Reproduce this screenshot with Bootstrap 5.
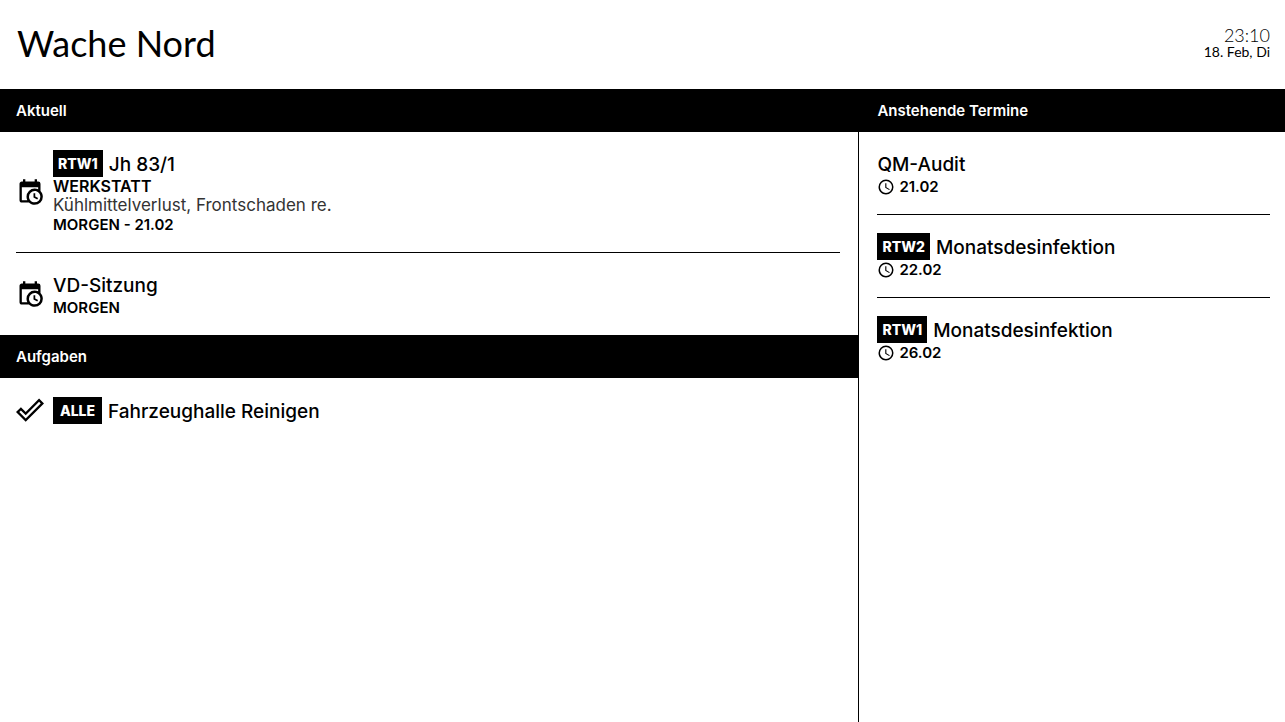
<!DOCTYPE html>
<html lang="de">
<head>
<meta charset="utf-8">
<meta name="viewport" content="width=device-width, initial-scale=1">
<title>Wache Nord</title>
<link href="https://cdn.jsdelivr.net/npm/bootstrap@5.3.0/dist/css/bootstrap.min.css" rel="stylesheet">
<style>
  body { font-family: Inter, "Open Sans", sans-serif; color: #000; background: #fff; }
  .station-head { padding: 21px 15px 24px 17px; }
  .station-head h1 { font: 400 36px/44px Lato, sans-serif; }
  .clock-time { font: 300 18px/18px Lato, sans-serif; }
  .clock-date { font: 400 14px/16px Lato, sans-serif; }
  .section-bar { background: #000; color: #fff; font-size: 15px; font-weight: 600; line-height: 43px; padding: 0 16px; }
  .upcoming { flex: 0 0 33.2%; border-left: 1px solid #000; }
  .upcoming .section-bar, .upcoming .entries { padding-left: 18px; }
  .entries { padding: 0 15px 0 16px; }
  .current .entries { padding-right: 18px; }
  .entry { padding: 18px 0; gap: 9px; }
  .entry + .entry { border-top: 1px solid #000; }
  .entry-title { font-size: 19px; font-weight: 500; line-height: 29px; height: 27px; gap: 6px; }
  .unit-tag { background: #000; color: #fff; font-size: 14px; font-weight: 800; line-height: 27px; min-width: 49px; padding: 0 5px; text-align: center; }
  .entry-kind { font-size: 16px; font-weight: 600; line-height: 19px; }
  .entry-note { font-size: 17px; line-height: 19px; color: #333; }
  .entry-date { font-size: 15px; font-weight: 600; line-height: 19px; gap: 4px; }
  svg { fill: #000; flex: none; }
</style>
</head>
<body class="min-vh-100 d-flex flex-column">
<svg class="d-none" aria-hidden="true">
  <symbol id="calendar-clock" viewBox="0 0 24 24"><path d="M15,13H16.5V15.82L18.94,17.23L18.19,18.53L15,16.69V13M19,8H5V19H9.67C9.24,18.09 9,17.07 9,16A7,7 0 0,1 16,9C17.07,9 18.09,9.24 19,9.67V8M5,21C3.89,21 3,20.1 3,19V5C3,3.89 3.89,3 5,3H6V1H8V3H16V1H18V3H19A2,2 0 0,1 21,5V11.1C22.24,12.36 23,14.09 23,16A7,7 0 0,1 16,23C14.09,23 12.36,22.24 11.1,21H5M16,11.15A4.85,4.85 0 0,0 11.15,16C11.15,18.68 13.32,20.85 16,20.85A4.85,4.85 0 0,0 20.85,16C20.85,13.32 18.68,11.15 16,11.15Z"/></symbol>
  <symbol id="check-outline" viewBox="0 0 24 24"><path d="M19.78,2.2L24,6.44L8.33,22.11L0,13.78L4.22,9.55L8.33,13.67L19.78,2.2M19.78,5L8.33,16.5L4.22,12.38L2.83,13.78L8.33,19.28L21.17,6.44L19.78,5Z"/></symbol>
  <symbol id="clock-outline" viewBox="0 0 24 24"><path d="M12,20A8,8 0 0,0 20,12A8,8 0 0,0 12,4A8,8 0 0,0 4,12A8,8 0 0,0 12,20M12,2A10,10 0 0,1 22,12A10,10 0 0,1 12,22C6.47,22 2,17.5 2,12A10,10 0 0,1 12,2M12.5,7V12.25L17,14.92L16.25,16.15L11,13V7H12.5Z"/></symbol>
</svg>

<header class="station-head d-flex justify-content-between align-items-center">
  <h1 class="m-0">Wache Nord</h1>
  <div class="text-end">
    <div class="clock-time">23:10</div>
    <div class="clock-date">18. Feb, Di</div>
  </div>
</header>

<main class="d-flex flex-grow-1">
  <div class="current flex-fill">
    <section>
      <h2 class="section-bar m-0">Aktuell</h2>
      <div class="entries">
        <article class="entry d-flex align-items-center">
          <svg width="28" height="28"><use href="#calendar-clock"/></svg>
          <div>
            <h3 class="entry-title d-flex m-0"><span class="unit-tag">RTW1</span>Jh 83/1</h3>
            <div class="entry-kind">WERKSTATT</div>
            <div class="entry-note">Kühlmittelverlust, Frontschaden re.</div>
            <div class="entry-date">MORGEN - 21.02</div>
          </div>
        </article>
        <article class="entry d-flex align-items-center">
          <svg width="28" height="28"><use href="#calendar-clock"/></svg>
          <div>
            <h3 class="entry-title d-flex m-0">VD-Sitzung</h3>
            <div class="entry-date">MORGEN</div>
          </div>
        </article>
      </div>
    </section>
    <section>
      <h2 class="section-bar m-0">Aufgaben</h2>
      <div class="entries">
        <article class="entry d-flex align-items-center">
          <svg width="28" height="28"><use href="#check-outline"/></svg>
          <h3 class="entry-title d-flex m-0"><span class="unit-tag">ALLE</span>Fahrzeughalle Reinigen</h3>
        </article>
      </div>
    </section>
  </div>

  <section class="upcoming">
    <h2 class="section-bar m-0">Anstehende Termine</h2>
    <div class="entries">
      <article class="entry">
        <h3 class="entry-title d-flex m-0">QM-Audit</h3>
        <div class="entry-date d-flex align-items-center"><svg width="18" height="18"><use href="#clock-outline"/></svg>21.02</div>
      </article>
      <article class="entry">
        <h3 class="entry-title d-flex m-0"><span class="unit-tag">RTW2</span>Monatsdesinfektion</h3>
        <div class="entry-date d-flex align-items-center"><svg width="18" height="18"><use href="#clock-outline"/></svg>22.02</div>
      </article>
      <article class="entry">
        <h3 class="entry-title d-flex m-0"><span class="unit-tag">RTW1</span>Monatsdesinfektion</h3>
        <div class="entry-date d-flex align-items-center"><svg width="18" height="18"><use href="#clock-outline"/></svg>26.02</div>
      </article>
    </div>
  </section>
</main>
<script src="https://cdn.jsdelivr.net/npm/bootstrap@5.3.0/dist/js/bootstrap.bundle.min.js"></script>
</body>
</html>
